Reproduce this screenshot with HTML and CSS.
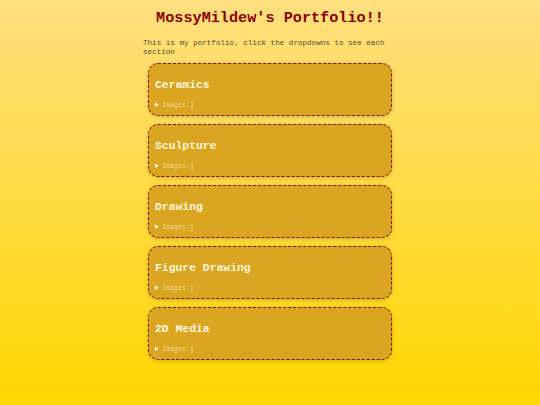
FILE: index.html
```html
<!DOCTYPE html>
<html lang="en">
<head>
  <meta charset="UTF-8" />
  <meta name="viewport" content="width=device-width, initial-scale=1.0" />
  <title>MossyMildew's Portfolio</title>
  <link rel="stylesheet" href="styles.css">
</head>
<body>
  <div class="page">
    <h1>MossyMildew's Portfolio!!</h1>
    <p class="intro">This is my portfolio, click the dropdowns to see each section</p>

    <!-- Sections -->
    <div class="section">
      <h2>Ceramics</h2>
      <details>
        <summary>Images:]</summary>
      </details>
    </div>

    <div class="section">
      <h2>Sculpture</h2>
      <details>
        <summary>Images:]</summary>
      </details>
    </div>

    <div class="section">
      <h2>Drawing</h2>
      <details>
        <summary>Images:]</summary>
      </details>
    </div>

    <div class="section">
      <h2>Figure Drawing</h2>
      <details>
        <summary>Images:]</summary>
      </details>
    </div>

    <div class="section">
      <h2>2D Media</h2>
      <details>
        <summary>Images:]</summary>
      </details>
    </div>
  </div>
</body>
</html>
```

FILE: styles.css
```css
* {
  box-sizing: border-box;
}

html {
  min-height: 100%;
  background: linear-gradient(#ffdf80, #ffd700);
}

body {
  margin: 0;
  font-family: "Liberation Mono", "Courier New", monospace;
  min-height: 405px;
}

.page {
  width: 254px;
  margin: 0 auto;
  padding-top: 9px;
}

h1 {
  margin: 0 0 12px 0;
  text-align: center;
  font-size: 15.2px;
  line-height: 18px;
  color: #8b0000;
}

.intro {
  margin: 0 0 7px 0;
  font-size: 7.6px;
  line-height: 8.5px;
  color: #5a4a30;
}

.section {
  margin: 0 5px 8px 5px;
  height: 53px;
  padding: 15px 6px 0 6px;
  background: #daa520;
  border: 1.5px dashed #7a1500;
  border-radius: 10px;
  box-shadow: 0 1px 4px rgba(0, 0, 0, 0.2);
}

.section h2 {
  margin: 0 0 9px 0;
  font-size: 11.4px;
  line-height: 13px;
  color: #fff8dc;
}

.section summary {
  font-size: 6.5px;
  line-height: 8px;
  color: #f0d590;
  cursor: pointer;
}

.section summary::marker {
  font-size: 7px;
  color: #fff8dc;
}
```
